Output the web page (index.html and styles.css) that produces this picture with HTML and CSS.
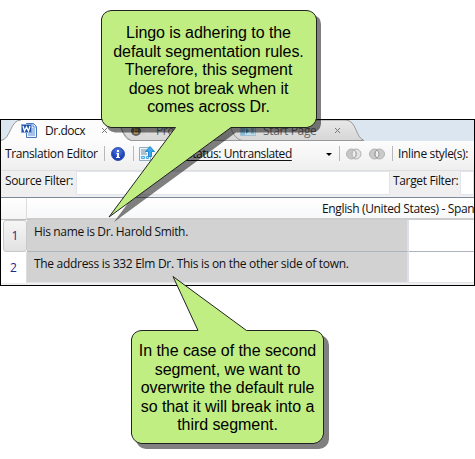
FILE: index.html
```html
<!DOCTYPE html>
<html lang="en">
<head>
<meta charset="utf-8">
<title>Translation Editor</title>
<link rel="stylesheet" href="styles.css">
</head>
<body>
<main class="window">
  <nav class="tabs">
    <svg class="tab-shapes" width="473" height="21" viewBox="0 0 473 21">
      <defs><linearGradient id="tab" x2="0" y2="1"><stop stop-color="#e8e8e8"/><stop offset="1" stop-color="#d6d6d6"/></linearGradient></defs>
      <path d="M224 0H345C356 1 354 17 363 20.500H238C230 18 228 3 218 0Z" fill="url(#tab)" stroke="#999"/>
      <path d="M112 0H225C231 5 230 18 241 20.500H130C121 17 122 4 112 0Z" fill="url(#tab)" stroke="#999"/>
      <path d="M0 21C10 19 9 0 20 0H112C122 3 120 18 130 21Z" fill="#fcfcfc"/>
      <path d="M0 20.500C10 19 9 0 20 0M112 0C122 3 120 18 130 20.500" fill="none" stroke="#999"/>
    </svg>
    <div class="tab tab-doc">
      <svg width="17" height="17" viewBox="0 0 17 17"><path d="M5.500 1.500H12.500L15.500 4.500V15.500H5.500Z" fill="#eef5ff" stroke="#4774bd"/><path d="M12 1V5H16M11 7H14M11 9H14M7 11H14M7 13H14" fill="none" stroke="#5c8ed4"/><path d="M.5 2.500H10.500V10.500H.5Z" fill="#2453a5" stroke="#7fa5df"/><path d="M2 4L3.500 9L5.500 5L7.500 9L9 4" fill="none" stroke="#fff" stroke-width="1.300"/></svg>
      <span class="t">Dr.docx</span><svg class="x" width="7" height="7"><path d="M1 1L6 6M6 1L1 6" stroke="#777"/></svg>
    </div>
    <div class="tab tab-project">
      <svg width="15" height="12" viewBox="0 0 15 12"><path d="M8 2H14V10H8Z" fill="#d6d6d6"/><circle cx="5" cy="6" r="5" fill="#626262"/><path d="M3.500 3V8H7M4 5H7" fill="none" stroke="#c9a649" stroke-width="1.300"/></svg>
      <span class="t">Project</span>
    </div>
    <div class="tab tab-start">
      <svg width="16" height="12" viewBox="0 0 16 12"><path d="M.5 1.500H15.500V10.500H.5Z" fill="#c3dae7" stroke="#9fbfd2"/><path d="M1 2H5V10H1Z" fill="#85bddd"/><path d="M6 3L9 6L6 9Z" fill="#429ac9"/><path d="M11 3H14V9H11Z" fill="#85bddd"/></svg>
      <span class="t">Start Page</span><svg class="x" width="7" height="7"><path d="M1 1L6 6M6 1L1 6" stroke="#777"/></svg>
    </div>
  </nav>
  <section class="toolbar">
    <span class="t title">Translation Editor</span>
    <i class="sep"></i>
    <svg class="info" width="14" height="14" viewBox="0 0 14 14"><defs><radialGradient id="blue" cy=".3"><stop stop-color="#5b84ea"/><stop offset="1" stop-color="#1c3fb4"/></radialGradient></defs><circle cx="7" cy="7" r="6.500" fill="url(#blue)" stroke="#3356ae"/><path d="M6 3H8V5H6ZM5.500 6H8V10H9V11H5V10H6V7H5.500Z" fill="#fff"/></svg>
    <i class="sep"></i>
    <svg class="upload" width="16" height="16" viewBox="0 0 16 16"><path d="M.5 1.500H11.500V14.500H.5Z" fill="#edf7fd" stroke="#8eaebe"/><path d="M2 4H8M2 6H7M2 8H8" stroke="#758d99"/><path d="M2.500 10.500H5.500V12.500H2.500ZM7.500 10.500H9.500V12.500H7.500Z" fill="#bfe4ff" stroke="#4eaae8"/><path d="M11 .5L15.500 5.500H12.500V10.500H9.500V5.500H6.500Z" fill="#35a9ed" stroke="#258bd0"/></svg>
    <span class="t status">Status: Untranslated</span>
    <i class="arrow"></i>
    <i class="sep"></i>
    <svg class="rings" width="40" height="12" viewBox="0 0 40 12"><g stroke="#b2b2b2"><circle cx="10" cy="6" r="5" fill="#e3e3e3"/><circle cx="5.500" cy="6" r="5" fill="#c6c6c6"/><path d="M8 2A5 5 0 0 0 8 10A5 5 0 0 0 8 2" fill="#eee"/><circle cx="28.500" cy="6" r="5" fill="#cacaca"/><circle cx="33.500" cy="6" r="5" fill="#cacaca"/><path d="M31 1.700Q27 6 31 10.300Q35 6 31 1.700" fill="#f1f1f1" stroke="#999"/></g></svg>
    <i class="sep"></i>
    <span class="t inline-label">Inline style(s):</span>
  </section>
  <section class="filters">
    <span class="t source-label">Source Filter:</span><div class="field source-field"></div>
    <span class="t target-label">Target Filter:</span><div class="field target-field"></div>
  </section>
  <section class="grid">
    <div class="corner"></div><div class="head"><span class="t">English (United States) - Spanish</span></div>
    <div class="num selected">1</div><div class="source"><span class="t">His name is Dr. Harold Smith.</span></div><div class="target"></div>
    <div class="num">2</div><div class="source"><span class="t wide">The address is 332 Elm Dr. This is on the other side of town.</span></div><div class="target"></div>
  </section>
</main>
<svg class="bubbles" width="475" height="459" viewBox="0 0 475 459">
  <path transform="translate(5 5)" fill="#000" fill-opacity=".5" d="M110 10H307Q316 11 316 19V119Q315 127 307 127.500H231L109 217L175.500 127.500H110Q102 126 101 119V19Q102 11 110 10Z"/>
  <path fill="#c1ee83" stroke="#222" d="M111 10.500H307Q315 11.500 316.500 19V118Q315 126 307 127.500H231L109 217L175.500 127.500H111Q103 126 101.500 118V19Q103 11.500 111 10.500Z"/>
  <rect x="136" y="335" width="193" height="114" rx="10" fill="#808080"/>
  <path fill="#c1ee83" stroke="#222" d="M141 330.500H198L173 276.500L246.500 330.500H314Q322 331.500 323.500 339V434Q322 442 314 443.500H141Q133 442 131.500 434V339Q133 331.500 141 330.500Z"/>
</svg>
<p class="note note-one"><span>Lingo is adhering to the</span><span>default segmentation rules.</span><span>Therefore, this segment</span><span>does not break when it</span><span>comes across Dr.</span></p>
<p class="note note-two"><span>In the case of the second</span><span>segment, we want to</span><span>overwrite the default rule</span><span>so that it will break into a</span><span>third segment.</span></p>
</body>
</html>
```
FILE: styles.css
```css
* { box-sizing: border-box; }
body { margin: 0; width: 475px; height: 459px; padding-top: 119px; overflow: hidden; position: relative; background: #fff; color: #111; font: 12px/16px "Open Sans", "Noto Sans", sans-serif; }
.window { width: 475px; height: 167px; border: 1px solid #000; overflow: hidden; background: #efefef; }
.t { white-space: nowrap; letter-spacing: -.35px; }
.wide { letter-spacing: -.3px; }
svg { flex: none; display: block; }
.tabs { height: 21px; display: flex; position: relative; background: #dce6f1; }
.tab-shapes { position: absolute; left: 0; top: 0; }
.tab { display: flex; align-items: center; position: relative; height: 21px; flex: none; }
.tab-doc { width: 130px; padding-left: 20px; }
.tab-doc .t { margin-left: 7px; width: 56px; letter-spacing: -.45px; }
.tab-project { width: 109px; color: #666; }
.tab-project .t { margin-left: 10px; }
.tab-start { color: #666; }
.tab-start .t { margin-left: 7px; width: 71px; letter-spacing: -.35px; }
.toolbar { height: 30px; display: flex; align-items: center; padding: 0 0 4px 4px; background: linear-gradient(#fcfcfc, #efefef); border-bottom: 1px solid #dedede; }
.title { width: 99px; flex: none; letter-spacing: -.38px; }
.sep { width: 1px; height: 15px; background: #b8b8b8; flex: none; }
.info { margin: 0 8px 0 6px; }
.upload { margin-left: 5px; margin-right: 31px; }
.status { width: 104px; flex: none; letter-spacing: -.42px; }
.status { text-decoration: underline; text-underline-offset: 2px; }
.arrow { margin: 1px 7px 0 36px; border: 3px solid transparent; border-top-color: #000; border-bottom: 0; flex: none; }
.rings { margin: 0 6px; }
.inline-label { margin-left: 5px; }
.filters { height: 26px; display: flex; align-items: flex-start; }
.source-label { width: 71px; margin-left: 4px; padding-top: 2px; flex: none; }
.field { height: 24px; background: #fff; border: 1px solid #e0e5ed; }
.source-field { width: 314px; flex: none; }
.target-label { margin-left: 3px; width: 67px; padding-top: 2px; flex: none; }
.target-field { flex: 1; }
.grid { border-top: 1px solid #7d8998; background: #fff; display: grid; grid-template-columns: 26px 382px 65px; grid-template-rows: 22px 32px 31px; }
.corner { border-right: 1px solid #ddd; border-bottom: 1px solid #bbb; background: linear-gradient(#fff, #f5f5f5); }
.head { grid-column: 2 / 4; padding: 3px 0 0 295px; overflow: hidden; border-bottom: 2px solid #ccc; background: linear-gradient(#fff, #f7f8fa); }
.num { display: flex; align-items: center; justify-content: center; color: #20298a; border-right: 1px solid #ddd; }
.selected { margin-left: 2px; border: 1px solid #c8c8c8; border-radius: 3px; background: linear-gradient(#f6f6f6, #e2e2e2); }
.source { padding: 4px 0 0 7px; background: #d2d2d2; border-bottom: 1px solid #aeb4bf; border-right: 2px solid #dde1e6; }
.target { border-bottom: 1px solid #aeb4bf; }
.source:nth-last-child(2), .target:last-child { border-bottom-color: #e1e4e8; }
.bubbles { position: absolute; left: 0; top: 0; }
.note { position: absolute; margin: 0; display: flex; flex-direction: column; align-items: center; color: #000; white-space: nowrap; font: 16px/18.5px "Liberation Sans", Arial, sans-serif; letter-spacing: -.06px; }
.note-one { left: 101px; top: 24px; width: 215px; }
.note-two { left: 131px; top: 342px; width: 193px; }
```
